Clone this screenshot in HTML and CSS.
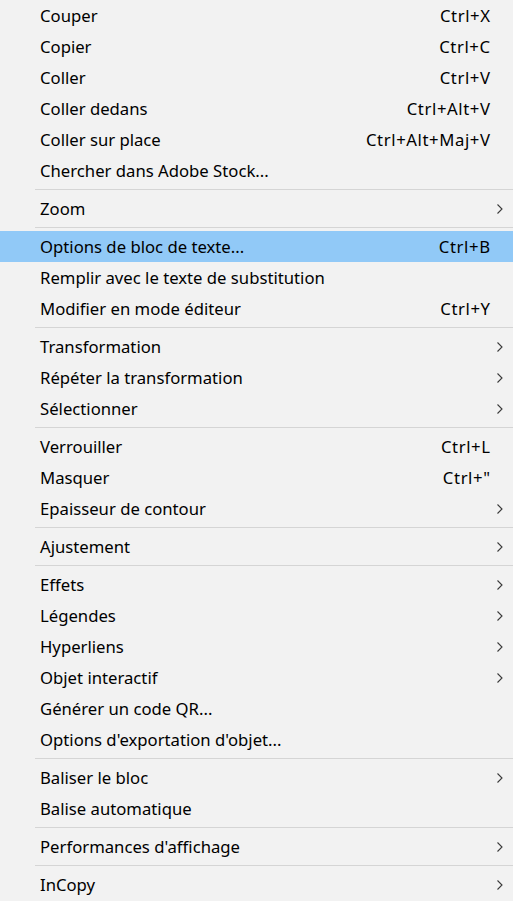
FILE: index.html
```html
<!DOCTYPE html>
<html lang="fr">
<head>
<meta charset="utf-8">
<link rel="stylesheet" href="styles.css">
</head>
<body>
<div class="menu">
  <div class="item"><span class="label">Couper</span><span class="key">Ctrl+X</span></div>
  <div class="item"><span class="label">Copier</span><span class="key">Ctrl+C</span></div>
  <div class="item"><span class="label">Coller</span><span class="key">Ctrl+V</span></div>
  <div class="item"><span class="label">Coller dedans</span><span class="key">Ctrl+Alt+V</span></div>
  <div class="item"><span class="label">Coller sur place</span><span class="key">Ctrl+Alt+Maj+V</span></div>
  <div class="item"><span class="label">Chercher dans Adobe Stock...</span></div>
  <div class="sep"></div>
  <div class="item"><span class="label">Zoom</span><span class="arrow"><svg width="6" height="10" viewBox="0 0 6 10"><polyline points="0.5,0.5 5,5 0.5,9.5" fill="none" stroke="#3a3a3a" stroke-width="1.1"/></svg></span></div>
  <div class="sep"></div>
  <div class="item active"><span class="label">Options de bloc de texte...</span><span class="key">Ctrl+B</span></div>
  <div class="item"><span class="label">Remplir avec le texte de substitution</span></div>
  <div class="item"><span class="label">Modifier en mode éditeur</span><span class="key">Ctrl+Y</span></div>
  <div class="sep"></div>
  <div class="item"><span class="label">Transformation</span><span class="arrow"><svg width="6" height="10" viewBox="0 0 6 10"><polyline points="0.5,0.5 5,5 0.5,9.5" fill="none" stroke="#3a3a3a" stroke-width="1.1"/></svg></span></div>
  <div class="item"><span class="label">Répéter la transformation</span><span class="arrow"><svg width="6" height="10" viewBox="0 0 6 10"><polyline points="0.5,0.5 5,5 0.5,9.5" fill="none" stroke="#3a3a3a" stroke-width="1.1"/></svg></span></div>
  <div class="item"><span class="label">Sélectionner</span><span class="arrow"><svg width="6" height="10" viewBox="0 0 6 10"><polyline points="0.5,0.5 5,5 0.5,9.5" fill="none" stroke="#3a3a3a" stroke-width="1.1"/></svg></span></div>
  <div class="sep"></div>
  <div class="item"><span class="label">Verrouiller</span><span class="key">Ctrl+L</span></div>
  <div class="item"><span class="label">Masquer</span><span class="key">Ctrl+"</span></div>
  <div class="item"><span class="label">Epaisseur de contour</span><span class="arrow"><svg width="6" height="10" viewBox="0 0 6 10"><polyline points="0.5,0.5 5,5 0.5,9.5" fill="none" stroke="#3a3a3a" stroke-width="1.1"/></svg></span></div>
  <div class="sep"></div>
  <div class="item"><span class="label">Ajustement</span><span class="arrow"><svg width="6" height="10" viewBox="0 0 6 10"><polyline points="0.5,0.5 5,5 0.5,9.5" fill="none" stroke="#3a3a3a" stroke-width="1.1"/></svg></span></div>
  <div class="sep"></div>
  <div class="item"><span class="label">Effets</span><span class="arrow"><svg width="6" height="10" viewBox="0 0 6 10"><polyline points="0.5,0.5 5,5 0.5,9.5" fill="none" stroke="#3a3a3a" stroke-width="1.1"/></svg></span></div>
  <div class="item"><span class="label">Légendes</span><span class="arrow"><svg width="6" height="10" viewBox="0 0 6 10"><polyline points="0.5,0.5 5,5 0.5,9.5" fill="none" stroke="#3a3a3a" stroke-width="1.1"/></svg></span></div>
  <div class="item"><span class="label">Hyperliens</span><span class="arrow"><svg width="6" height="10" viewBox="0 0 6 10"><polyline points="0.5,0.5 5,5 0.5,9.5" fill="none" stroke="#3a3a3a" stroke-width="1.1"/></svg></span></div>
  <div class="item"><span class="label">Objet interactif</span><span class="arrow"><svg width="6" height="10" viewBox="0 0 6 10"><polyline points="0.5,0.5 5,5 0.5,9.5" fill="none" stroke="#3a3a3a" stroke-width="1.1"/></svg></span></div>
  <div class="item"><span class="label">Générer un code QR...</span></div>
  <div class="item"><span class="label">Options d'exportation d'objet...</span></div>
  <div class="sep"></div>
  <div class="item"><span class="label">Baliser le bloc</span><span class="arrow"><svg width="6" height="10" viewBox="0 0 6 10"><polyline points="0.5,0.5 5,5 0.5,9.5" fill="none" stroke="#3a3a3a" stroke-width="1.1"/></svg></span></div>
  <div class="item"><span class="label">Balise automatique</span></div>
  <div class="sep"></div>
  <div class="item"><span class="label">Performances d'affichage</span><span class="arrow"><svg width="6" height="10" viewBox="0 0 6 10"><polyline points="0.5,0.5 5,5 0.5,9.5" fill="none" stroke="#3a3a3a" stroke-width="1.1"/></svg></span></div>
  <div class="sep"></div>
  <div class="item"><span class="label">InCopy</span><span class="arrow"><svg width="6" height="10" viewBox="0 0 6 10"><polyline points="0.5,0.5 5,5 0.5,9.5" fill="none" stroke="#3a3a3a" stroke-width="1.1"/></svg></span></div>
</div>
</body>
</html>
```

FILE: styles.css
```css
html, body {
  margin: 0;
  padding: 0;
  background: #f2f2f2;
}

.menu {
  width: 513px;
  background: #f2f2f2;
  font-family: "Noto Sans", "Open Sans", sans-serif;
  font-size: 16.7px;
  color: #000;
}

.item {
  height: 31px;
  display: grid;
  grid-template-columns: 1fr auto 23px;
  align-items: center;
  padding-left: 40px;
}

.item.active {
  background: #91c9f7;
}

.label {
  grid-column: 1;
  white-space: nowrap;
}

.key {
  grid-column: 2;
  white-space: nowrap;
  letter-spacing: 0.6px;
  margin-right: -0.6px;
}

.arrow {
  grid-column: 3;
  display: flex;
  align-items: center;
  padding-left: 7px;
}

.arrow svg {
  display: block;
}

.sep {
  height: 1px;
  margin: 3px 0 3px 35px;
  background: #d5d5d5;
}
```
